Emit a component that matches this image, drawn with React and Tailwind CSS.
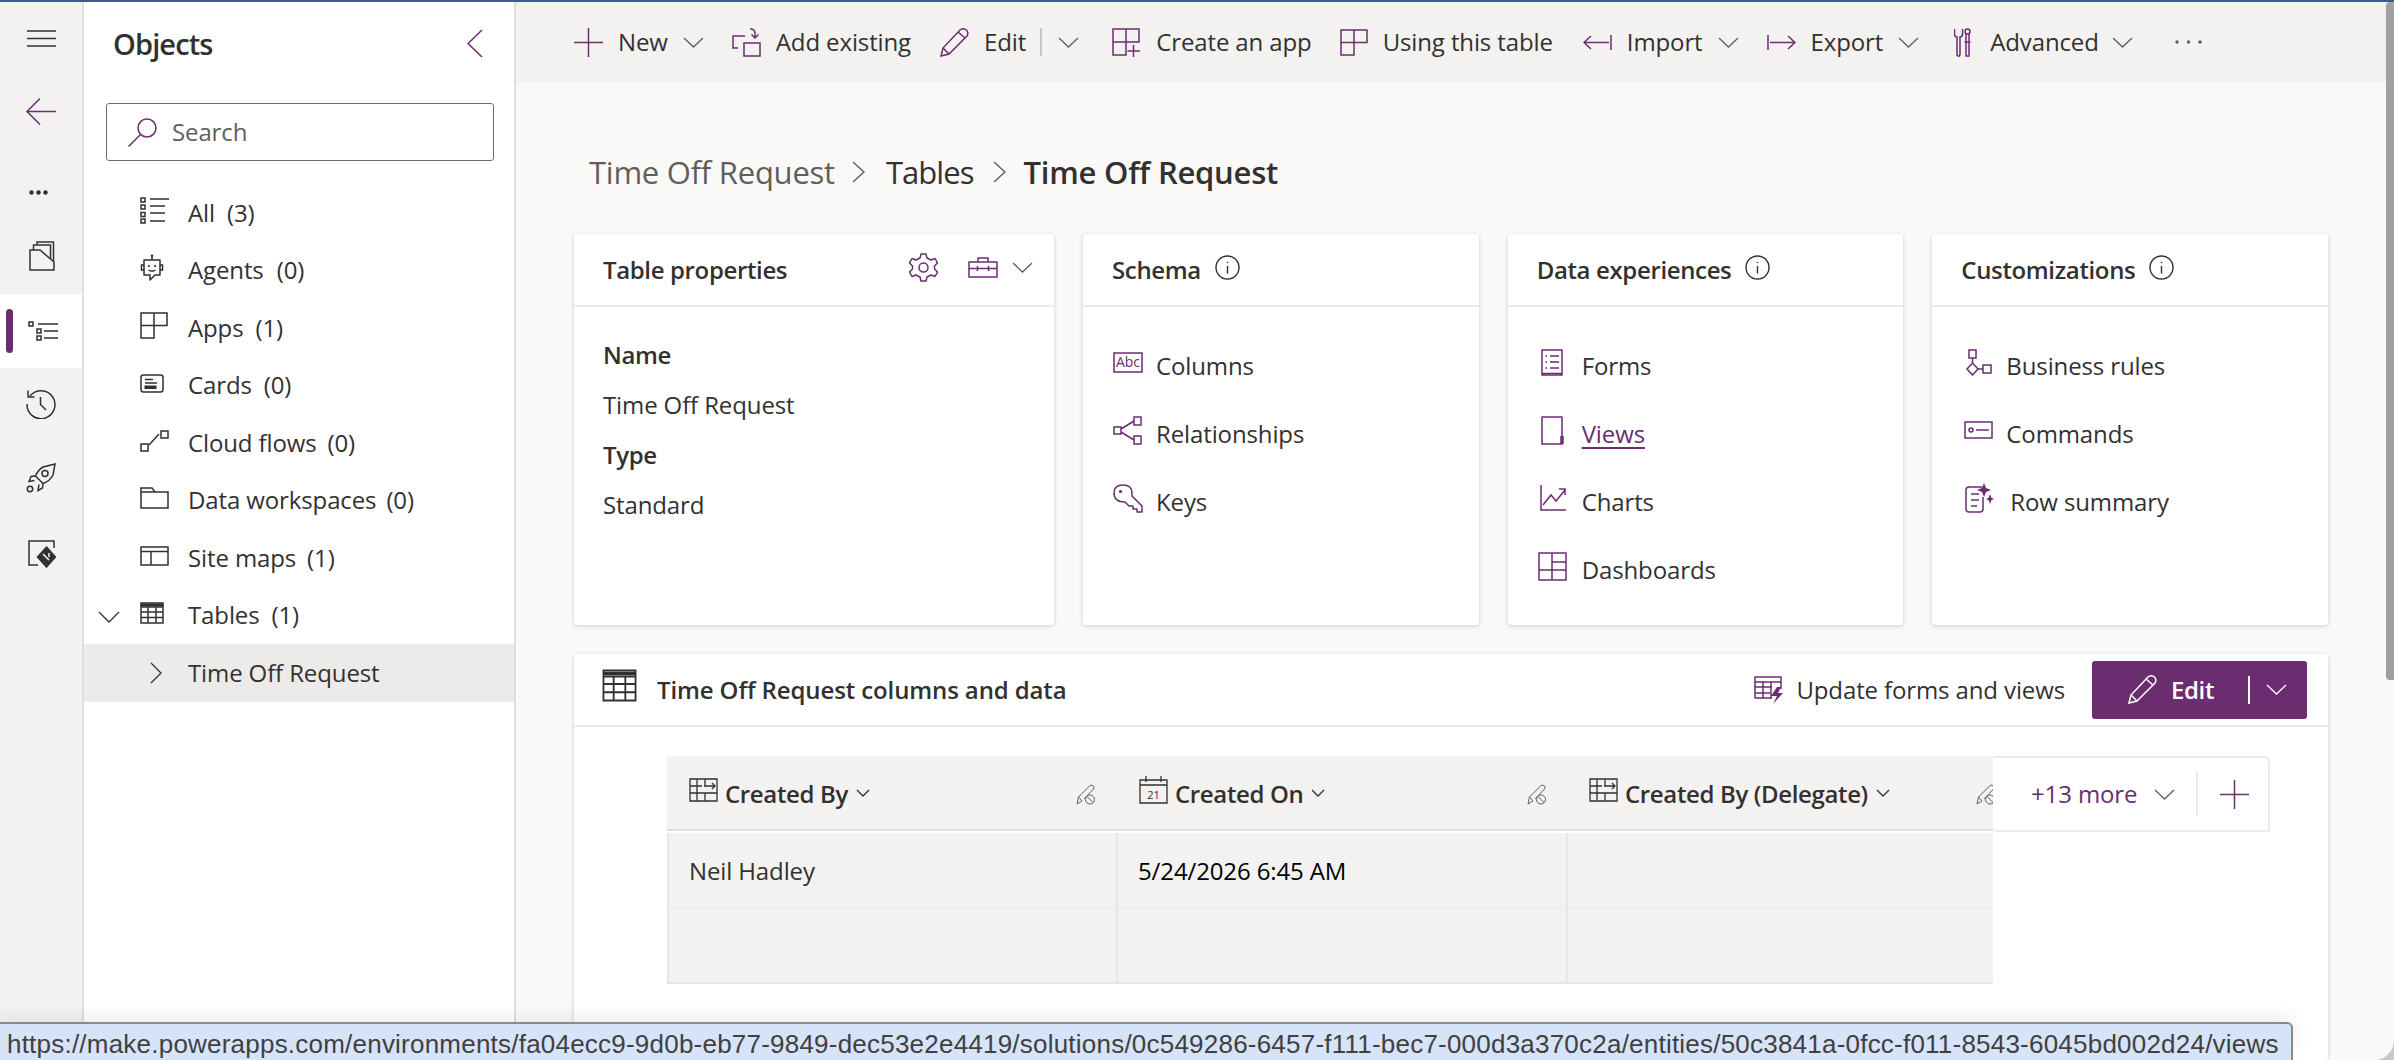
import React from 'react';

const Ico = ({ w, h, className = 'text-[#6b2c70]', sw = 1.5, children }) => (
  <svg width={w} height={h} viewBox={`0 0 ${w} ${h}`} fill="none" stroke="currentColor" strokeWidth={sw} className={`shrink-0 ${className}`}>
    {children}
  </svg>
);
const DK = 'text-[#323130]';
const Chev = ({ w = 21, h = 11, className = 'text-[#605e5c]' }) => (
  <Ico w={w} h={h} className={className} sw={1.3}><path d={`M1 1L${w / 2} ${h - 1}L${w - 1} 1`} /></Ico>
);
const Plus = ({ s = 29 }) => (
  <Ico w={s} h={s}><path d={`M${s / 2} 0V${s}M0 ${s / 2}H${s}`} /></Ico>
);
const Info = () => (
  <Ico w={25} h={25} className={DK} sw={1.4}><circle cx="12.5" cy="12.5" r="11.5" /><path d="M12.5 11V18.5" /><circle cx="12.5" cy="7.5" r="0.8" fill="currentColor" stroke="none" /></Ico>
);
const Pencil = ({ className = 'text-[#6b2c70]' }) => (
  <Ico w={29} h={29} className={className}>
    <path d="M1 28L3 20L20 2Q23 -0.5 26.5 2Q29 5 27 8L9 26Z" /><path d="M3 20L9 26M18 4L25 10" />
  </Ico>
);
const EditColPencil = () => (
  <Ico w={22} h={21} className="text-[#605e5c]" sw={1}>
    <path d="M1 20L2.5 13L14 1.5Q16 0.5 17.5 2Q18.5 3.5 17.5 5L8 15" /><path d="M2.5 13L6 17L1 20" /><circle cx="14" cy="15.5" r="4.5" /><path d="M11 12.5L17 18.5" />
  </Ico>
);
const LookupIco = () => (
  <Ico w={29} h={24} className={DK} sw={1.3}>
    <path d="M1 1H28V23H1Z" /><path d="M1 8H13M1 15H28M8 1V23M16 1V8M16 15V23" /><path d="M15 8H26M23 5L26 8L23 11" />
  </Ico>
);
const CalIco = () => (
  <Ico w={29} h={28} className={DK} sw={1.3}>
    <path d="M1 4H28V27H1Z" /><path d="M1 9H28M7 0V6M22 0V6" />
    <text x="14.5" y="23" textAnchor="middle" fontSize="11" fontFamily="'Open Sans',sans-serif" fill="currentColor" stroke="none">21</text>
  </Ico>
);

const MenuI = () => <Ico w={29} h={18} className={DK} sw={1.4}><path d="M0 1H29M0 8.5H29M0 16H29" /></Ico>;
const BackI = () => <Ico w={30} h={27}><path d="M30 13.5H1M14 0.5L1 13.5L14 26.5" /></Ico>;
const DotsI = () => (
  <Ico w={19} h={5} className={DK}>
    <g fill="currentColor" stroke="none"><circle cx="2.5" cy="2.5" r="2.2" /><circle cx="9.5" cy="2.5" r="2.2" /><circle cx="16.5" cy="2.5" r="2.2" /></g>
  </Ico>
);
const ToolDots = () => (
  <Ico w={27} h={4} className="text-[#605e5c]">
    <g fill="currentColor" stroke="none"><circle cx="2" cy="2" r="1.7" /><circle cx="13.5" cy="2" r="1.7" /><circle cx="25" cy="2" r="1.7" /></g>
  </Ico>
);
const BundleI = () => (
  <Ico w={26} h={30} className={DK}>
    <path d="M1 29V9H11L25 21V29Z" /><path d="M4.5 9V4H21.5V18" /><path d="M8 4V1H24.5V21" />
  </Ico>
);
const ListActiveI = () => (
  <Ico w={30} h={20} className={DK}>
    <path d="M1 1H5V5H1ZM9 8H13V12H9ZM9 15H13V19H9Z" /><path d="M10 3H30M16 10H30M16 17H30" />
  </Ico>
);
const HistoryI = () => (
  <Ico w={30} h={30} className={DK}>
    <path d="M4 7A14 14 0 1 1 1 15" /><path d="M2 1.5V8H8.5" /><path d="M14.5 8V15.5L20 21" />
  </Ico>
);
const RocketI = () => (
  <Ico w={30} h={30} className={DK}>
    <path d="M29 1L17 4Q12 7 9.5 13L17 20.5Q24 18 27 12Z" /><circle cx="19" cy="10.5" r="3" />
    <path d="M9.5 13L5 13.5L3 18.5L8.5 17.5M17 20.5L16.5 25L12 27.5L13 21.5" /><circle cx="4" cy="26" r="2.7" />
  </Ico>
);
const GitI = () => (
  <Ico w={28} h={28} className={DK}>
    <path d="M10 25H1V1H26V8" />
    <path d="M18.5 7L27.5 17L18.5 27L9.5 17Z" fill="currentColor" />
    <path d="M15 14L21 20M21 13V17" stroke="#f3f2f1" />
  </Ico>
);
const SearchI = () => <Ico w={29} h={29}><circle cx="19" cy="10" r="9" /><path d="M12.5 16.5L0.5 28.5" /></Ico>;

const NavAll = () => (
  <Ico w={29} h={27} className={DK}>
    <path d="M1 1H5V5H1ZM1 8H5V12H1ZM1 15.5H5V19.5H1ZM1 22H5V26H1Z" /><path d="M10 2H29M10 9H25M10 16H25M10 24H25" />
  </Ico>
);
const NavAgent = () => (
  <Ico w={24} h={28} className={DK}>
    <circle cx="12" cy="1.8" r="1.3" fill="currentColor" stroke="none" /><path d="M12 2V6" />
    <path d="M4 6H20V21H15L10 26V21H4Z" strokeLinejoin="round" /><path d="M4 11H1.5V16H4M20 11H22.5V16H20" />
    <circle cx="9" cy="12" r="1.1" fill="currentColor" stroke="none" /><circle cx="15" cy="12" r="1.1" fill="currentColor" stroke="none" /><path d="M8.5 16Q12 18.5 15.5 16" />
  </Ico>
);
const GridApp = ({ w = 28, h = 27, className = DK }) => (
  <Ico w={w} h={h} className={className}>
    <path d={`M1 1H${w - 1}V${h / 2}H${w / 2}V${h - 1}H1Z`} /><path d={`M${w / 2} 1V${h / 2}M1 ${h / 2}H${w / 2}`} />
  </Ico>
);
const NavCards = () => (
  <Ico w={24} h={19} className={DK}>
    <rect x="1" y="1" width="22" height="17" rx="2.5" /><path d="M5 5.5H13M5 9H17" /><rect x="4.5" y="11.5" width="12" height="3.5" fill="currentColor" stroke="none" />
  </Ico>
);
const NavFlow = () => (
  <Ico w={29} h={22} className={DK}><path d="M1 14H8V21H1ZM21 1H28V8H21Z" /><path d="M9 15L19 4" /></Ico>
);
const NavFolder = () => <Ico w={29} h={22} className={DK}><path d="M1 21V1H12L15 5H28V21ZM1 5H15" /></Ico>;
const NavSite = () => <Ico w={29} h={20} className={DK}><path d="M1 1H28V19H1Z" /><path d="M1 5.5H28M11 5.5V19" /></Ico>;
const NavTable = ({ w = 24, h = 22, sw = 1.5 }) => (
  <Ico w={w} h={h} className={DK} sw={sw}>
    <path d="M1 1H23V21H1Z" transform={`scale(${w / 24} ${h / 22})`} vectorEffect="non-scaling-stroke" />
    <path d="M1 5H23M1 10H23M1 15.5H23M8 5V21M16 5V21" transform={`scale(${w / 24} ${h / 22})`} vectorEffect="non-scaling-stroke" />
    <path d="M1 3H23" strokeWidth={sw * 2} transform={`scale(${w / 24} ${h / 22})`} vectorEffect="non-scaling-stroke" />
  </Ico>
);

const AddExisting = () => (
  <Ico w={29} h={29}><path d="M13 8H1V20H6" /><path d="M12 15H28V28H12Z" /><path d="M18 1Q23 1 23 5V9M19.5 6.5L23 10L26.5 6.5" /></Ico>
);
const CreateApp = () => (
  <Ico w={29} h={29}>
    <path d="M1 1H27V14H14V27H1Z" /><path d="M14 1V14H1" /><path d="M21.5 17V29M15.5 23H28" />
  </Ico>
);
const ImportI = () => <Ico w={29} h={15}><path d="M28 0V15M26 7.5H1M8 1L1 7.5L8 14" /></Ico>;
const ExportI = () => <Ico w={29} h={15}><path d="M1 0V15M3 7.5H28M21 1L28 7.5L21 14" /></Ico>;
const AdvancedI = () => (
  <Ico w={17} h={29}>
    <path d="M1 1V6Q1 9 3.5 9V26Q3.5 28.5 5 28Q6.5 28.5 6.5 26V9Q9 9 9 6V1" transform="translate(-0.5 0)" /><circle cx="13.5" cy="3.5" r="2.5" /><path d="M12 6V28H15V6M10.5 14H16.5" />
  </Ico>
);
const Gear = () => (
  <Ico w={29} h={29}>
    <path d="M12 1H17L18 5L22 7L26 5.5L28.5 10L25.5 13V16L28.5 19L26 23.5L22 22L18 24L17 28H12L11 24L7 22L3 23.5L0.5 19L3.5 16V13L0.5 10L3 5.5L7 7L11 5Z" strokeLinejoin="round" /><circle cx="14.5" cy="14.5" r="4.5" />
  </Ico>
);
const Briefcase = () => (
  <Ico w={30} h={21}><path d="M1 5H29V20H1Z" /><path d="M10 5V1H20V5M1 11.5H29M9.5 9V14M20.5 9V14" /></Ico>
);
const AbcI = () => (
  <Ico w={30} h={21}>
    <path d="M1 1H29V20H1Z" /><text x="15" y="15" textAnchor="middle" fontSize="14" fontFamily="'Open Sans',sans-serif" fill="currentColor" stroke="none">Abc</text>
  </Ico>
);
const RelI = () => (
  <Ico w={30} h={29}><path d="M1 11H8V18H1ZM21 1H28V9H21ZM21 20H28V28H21Z" /><path d="M8 13L21 5M8 16L21 24" /></Ico>
);
const KeyI = () => (
  <Ico w={30} h={29}>
    <path d="M10 1Q19 1 19 9L19 12L29 22V28H24V25H20V22H16L12 18Q1 18 1 9Q1 1 10 1Z" strokeLinejoin="round" /><circle cx="7.5" cy="7.5" r="1.6" fill="currentColor" stroke="none" />
  </Ico>
);
const FormI = () => (
  <Ico w={22} h={27}><path d="M1 1H21V26H1Z" /><path d="M1 24.5H21" /><path d="M4.5 7H6M9 7H18M4.5 13H6M9 13H18M4.5 19H6M9 19H18" /></Ico>
);
const ViewI = () => (
  <Ico w={24} h={29}><path d="M1 1H21V28H1Z" /><path d="M21 20V28" strokeWidth="3.5" /></Ico>
);
const ChartI = () => (
  <Ico w={26} h={26}><path d="M1 0V25H26" /><path d="M3 20L11 10L16 16L25 5M19 4H25V10" /></Ico>
);
const DashI = () => (
  <Ico w={29} h={29}><path d="M1 1H28V28H1Z" /><path d="M14 1V18H1M14 10H28M1 18H28M14 18V28" /></Ico>
);
const BizI = () => (
  <Ico w={28} h={27}><path d="M5 1H12V9H5Z" /><path d="M8.5 9V14" /><path d="M8.5 14L14 20L8.5 26L3 20Z" /><path d="M14 20H19M19 16H27V24H19Z" /></Ico>
);
const CmdI = () => (
  <Ico w={29} h={18}><path d="M1 1H28V17H1Z" /><circle cx="7" cy="9" r="2" /><path d="M12 9H25" /></Ico>
);
const SummaryI = () => (
  <Ico w={30} h={30}>
    <path d="M18 4H5Q2 4 2 7V26Q2 29 5 29H16Q19 29 19 26V14" /><path d="M7 11H15M7 17H15M7 23H13" />
    <path d="M20 0L22 5L27 7L22 9L20 14L18 9L13 7L18 5Z" fill="currentColor" stroke="none" /><path d="M26 11L27.3 14.7L30 16L27.3 17.3L26 21L24.7 17.3L22 16L24.7 14.7Z" fill="currentColor" stroke="none" />
  </Ico>
);
const UpdateI = () => (
  <Ico w={30} h={28}>
    <path d="M18 22H1V1H27V13" /><path d="M1 6H27M1 11H18M1 17H16M9 6V22M17 6V22" /><path d="M23 11L17 20H23L19 28L29 17H24L27 11Z" fill="currentColor" stroke="none" />
  </Ico>
);

const rail = [
  ['h-[74px]', <MenuI />],
  ['h-[70px]', <BackI />],
  ['h-[52px] mt-[20px] pr-[6px]', <DotsI />],
  ['h-[76px] pl-[2px]', <BundleI />],
  null,
  ['h-[72px]', <HistoryI />],
  ['h-[76px]', <RocketI />],
  ['h-[76px] pl-[2px]', <GitI />],
];

const nav = [
  [<NavAll />, 'All', '(3)', 'ml-[12px]'],
  [<NavAgent />, 'Agents', '(0)', 'ml-[13px]'],
  [<GridApp />, 'Apps', '(1)', 'ml-[12px]'],
  [<NavCards />, 'Cards', '(0)', 'ml-[12px]'],
  [<NavFlow />, 'Cloud flows', '(0)', 'ml-[11px]'],
  [<NavFolder />, 'Data workspaces', '(0)', 'ml-[10px]'],
  [<NavSite />, 'Site maps', '(1)', 'ml-[11px]'],
  [<NavTable />, 'Tables', '(1)', 'ml-[12px]'],
];

const ToolItem = ({ icon, label, chev, mr = 'mr-[29px]', gap = 'gap-[15px]', chevMl = '' }) => (
  <div className={`flex items-center ${gap} ${mr}`}>
    {icon}
    <span className="whitespace-nowrap">{label}</span>
    {chev && <span className={chevMl}><Chev /></span>}
  </div>
);

const LinkRow = ({ icon, label, underline, iconW }) => (
  <div className="flex h-[68px] items-center">
    <div className={`flex items-center mb-[8px] ${iconW}`}>{icon}</div>
    <span className={underline ? 'underline underline-offset-[4px] text-[#6b2c70]' : ''}>{label}</span>
  </div>
);

const Card = ({ title, right, className = 'flex-1', children, px = 'px-[29px]' }) => (
  <section className={`bg-white rounded-[3px] shadow-[0_1px_4px_rgba(0,0,0,0.18)] ${className}`}>
    <header className={`h-[73px] flex items-center border-b-2 border-[#edebe9] ${px}`}>
      <h2 className="font-semibold tracking-[-0.015em] whitespace-nowrap">{title}</h2>
      {right}
    </header>
    {children}
  </section>
);

const ColHead = ({ icon, label, pencilMl }) => (
  <div className="w-[450px] shrink-0 flex items-center pl-[22px] pt-[2px]">
    <div className="mb-[8px]">{icon}</div>
    <span className="ml-[7px] font-semibold tracking-[-0.015em] whitespace-nowrap">{label}</span>
    <Chev w={14} h={8} className="text-[#323130] ml-[8px] mb-[2px]" />
    <div className={`${pencilMl} mt-[2px]`}><EditColPencil /></div>
  </div>
);

export default function App() {
  return (
    <div className="relative w-[2394px] h-[1060px] overflow-hidden bg-[#c8c8c8] font-['Open_Sans',sans-serif] text-[24px] tracking-[-0.005em] text-[#323130]">
      <div className="h-full flex flex-col rounded-br-[20px] overflow-hidden bg-[#faf9f8]">
        <div className="h-[2px] shrink-0 bg-[#3f5b86]" />
        <div className="flex-1 flex min-h-0">
          {/* Rail */}
          <aside className="w-[84px] shrink-0 bg-[#f3f2f1] border-r-2 border-[#e1dfdd] flex flex-col">
            {rail.map((r, i) =>
              r ? (
                <div key={i} className={`flex items-center justify-center ${r[0]}`}>{r[1]}</div>
              ) : (
                <div key={i} className="relative h-[74px] pl-[3px] bg-white flex items-center justify-center">
                  <span className="absolute left-[6px] top-[15px] w-[7px] h-[44px] rounded-full bg-[#6b2c70]" />
                  <ListActiveI />
                </div>
              )
            )}
          </aside>

          {/* Objects */}
          <aside className="w-[432px] shrink-0 bg-white border-r-2 border-[#e1dfdd] flex flex-col">
            <div className="h-[101px] flex items-center justify-between pl-[29px] pr-[31px] pb-[18px]">
              <h1 className="text-[29px] font-semibold tracking-[-0.03em]">Objects</h1>
              <Ico w={16} h={29}><path d="M15 1L1 14.5L15 28" /></Ico>
            </div>
            <div className="ml-[22px] w-[388px] h-[58px] border-[1.5px] border-[#6e6c6a] rounded-[3px] flex items-center pl-[21px] gap-[15px] text-[#605e5c]">
              <SearchI />
              <span>Search</span>
            </div>
            <nav className="mt-[23px] flex flex-col">
              {nav.map(([icon, label, count, ml]) => (
                <div key={label} className="relative h-[57.5px] flex items-center pl-[56px]">
                  {label === 'Tables' && (
                    <span className="absolute left-[14px] top-[24px]"><Chev w={22} h={12} className="text-[#323130]" /></span>
                  )}
                  <div className="w-[48px] flex items-center mb-[4px]">{icon}</div>
                  <span className="whitespace-nowrap">{label}<span className={ml}>{count}</span></span>
                </div>
              ))}
              <div className="h-[58px] bg-[#edebe9] flex items-center pl-[66px]">
                <div className="w-[38px] flex items-center"><Ico w={12} h={22} className={DK} sw={1.3}><path d="M1 1L11 11L1 21" /></Ico></div>
                <span>Time Off Request</span>
              </div>
            </nav>
          </aside>

          {/* Main */}
          <main className="flex-1 min-w-0 flex flex-col">
            <div className="h-[80px] shrink-0 bg-[#f3f2f1] flex items-center pl-[58px]">
              <ToolItem icon={<Plus />} label="New" chev mr="mr-[28px]" />
              <ToolItem icon={<AddExisting />} label="Add existing" />
              <div className="flex items-center mr-[33px]">
                <Pencil />
                <span className="ml-[15px]">Edit</span>
                <span className="ml-[14px] mr-[16px] w-[2px] h-[28px] bg-[#c8c6c4]" />
                <Chev />
              </div>
              <ToolItem icon={<CreateApp />} label="Create an app" mr="mr-[28px]" />
              <ToolItem icon={<GridApp className="text-[#6b2c70]" />} label="Using this table" mr="mr-[30px]" />
              <ToolItem icon={<ImportI />} label="Import" chev mr="mr-[28px]" />
              <ToolItem icon={<ExportI />} label="Export" chev mr="mr-[35px]" />
              <ToolItem icon={<AdvancedI />} label="Advanced" chev mr="mr-[42px]" gap="gap-[19px]" chevMl="-ml-[6px]" />
              <ToolDots />
            </div>

            <div className="flex-1 min-h-0 pl-[58px] pr-[66px] flex flex-col">
              <div className="mt-[67px] h-[46px] pl-[15px] flex items-center text-[31px] tracking-[-0.008em] text-[#323130]">
                <span className="text-[#605e5c]">Time Off Request</span>
                <Ico w={13} h={22} className="text-[#605e5c] ml-[17px] mr-[21px]" sw={1.4}><path d="M1 1L12 11L1 21" /></Ico>
                <span className="tracking-[-0.03em]">Tables</span>
                <Ico w={13} h={22} className="text-[#605e5c] ml-[19px] mr-[18px]" sw={1.4}><path d="M1 1L12 11L1 21" /></Ico>
                <span className="font-semibold">Time Off Request</span>
              </div>

              <div className="mt-[39px] h-[391px] shrink-0 flex gap-[29px]">
                <Card
                  className="w-[480px] shrink-0"
                  title="Table properties"
                  right={
                    <div className="ml-auto flex items-center -mr-[8px] mb-[5px]">
                      <Gear />
                      <div className="ml-[30px]"><Briefcase /></div>
                      <div className="ml-[14px]"><Chev /></div>
                    </div>
                  }
                >
                  <dl className="pl-[29px] pt-[23px] flex flex-col">
                    <dt className="h-[50px] flex items-center font-semibold tracking-[-0.015em]">Name</dt>
                    <dd className="h-[50px] flex items-center">Time Off Request</dd>
                    <dt className="h-[50px] flex items-center font-semibold tracking-[-0.015em]">Type</dt>
                    <dd className="h-[50px] flex items-center">Standard</dd>
                  </dl>
                </Card>
                <Card title={<span className="flex items-center gap-[14px]">Schema<span className="mb-[5px] font-normal"><Info /></span></span>}>
                  <div className="pl-[30px] pt-[25px]">
                    <LinkRow icon={<AbcI />} label="Columns" iconW="w-[43px]" />
                    <LinkRow icon={<RelI />} label="Relationships" iconW="w-[43px]" />
                    <LinkRow icon={<KeyI />} label="Keys" iconW="w-[43px]" />
                  </div>
                </Card>
                <Card title={<span className="flex items-center gap-[14px]">Data experiences<span className="mb-[5px] font-normal"><Info /></span></span>}>
                  <div className="pl-[30px] pt-[25px]">
                    <LinkRow icon={<FormI />} label="Forms" iconW="w-[44px] pl-[3px]" />
                    <LinkRow icon={<ViewI />} label="Views" underline iconW="w-[44px] pl-[3px]" />
                    <LinkRow icon={<ChartI />} label="Charts" iconW="w-[44px] pl-[2px]" />
                    <LinkRow icon={<DashI />} label="Dashboards" iconW="w-[44px]" />
                  </div>
                </Card>
                <Card title={<span className="flex items-center gap-[14px]">Customizations<span className="mb-[5px] font-normal"><Info /></span></span>}>
                  <div className="pl-[32px] pt-[25px]">
                    <LinkRow icon={<BizI />} label="Business rules" iconW="w-[42px]" />
                    <LinkRow icon={<CmdI />} label="Commands" iconW="w-[42px]" />
                    <LinkRow icon={<SummaryI />} label="Row summary" iconW="w-[46px]" />
                  </div>
                </Card>
              </div>

              <section className="mt-[29px] flex-1 min-h-[406px] bg-white rounded-[3px] shadow-[0_1px_4px_rgba(0,0,0,0.18)]">
                <header className="h-[73px] border-b-2 border-[#edebe9] flex items-center pl-[28px] pr-[21px]">
                  <div className="mb-[8px]"><NavTable w={35} h={33} sw={1.8} /></div>
                  <h2 className="ml-[20px] font-semibold tracking-[-0.005em] whitespace-nowrap">Time Off Request columns and data</h2>
                  <div className="ml-auto flex items-center">
                    <UpdateI />
                    <span className="ml-[12px] whitespace-nowrap">Update forms and views</span>
                    <div className="ml-[27px] w-[215px] h-[58px] rounded-[3px] bg-[#6b2c70] text-white flex items-center pl-[36px]">
                      <Pencil className="text-white" />
                      <span className="ml-[14px] font-semibold tracking-[-0.015em]">Edit</span>
                      <span className="ml-[34px] w-[2px] h-[28px] bg-white" />
                      <span className="ml-[16px]"><Chev className="text-white" /></span>
                    </div>
                  </div>
                </header>
                <div className="ml-[93px] mt-[29px] flex">
                  <div className="w-[1326px] shrink-0 overflow-hidden">
                    <div className="h-[75px] bg-[#f3f2f1] border-b-2 border-[#e1dfdd] flex">
                      <ColHead icon={<LookupIco />} label="Created By" pencilMl="ml-[206px]" />
                      <ColHead icon={<CalIco />} label="Created On" pencilMl="ml-[202px]" />
                      <ColHead icon={<LookupIco />} label="Created By (Delegate)" pencilMl="ml-[86px]" />
                    </div>
                    <div className="mt-[2px] bg-[#f3f2f1] border-l-2 border-b-2 border-[#e8e6e4] flex h-[151px]">
                      <div className="w-[449px] shrink-0 border-r-2 border-[#e8e6e4] flex flex-col">
                        <div className="h-[75px] border-b border-[#ebe9e7] flex items-center pl-[20px] pt-[2px]">Neil Hadley</div>
                      </div>
                      <div className="w-[450px] shrink-0 border-r-2 border-[#e8e6e4] flex flex-col">
                        <div className="h-[75px] border-b border-[#ebe9e7] flex items-center pl-[20px] pt-[2px] text-black">5/24/2026 6:45 AM</div>
                      </div>
                      <div className="flex-1 flex flex-col">
                        <div className="h-[75px] border-b border-[#ebe9e7]" />
                      </div>
                    </div>
                  </div>
                  <div className="ml-px w-[276px] h-[76px] border-2 border-l-0 border-[#edebe9] rounded-tr-[6px] flex items-center text-[#6b2c70]">
                    <span className="ml-[37px] whitespace-nowrap">+13 more</span>
                    <span className="ml-[17px]"><Chev className="text-[#605e5c]" /></span>
                    <span className="ml-[21px] w-[2px] h-[44px] bg-[#edebe9]" />
                    <span className="ml-[22px]"><Plus /></span>
                  </div>
                </div>
              </section>
            </div>
          </main>
        </div>
      </div>

      {/* Scrollbar */}
      <div className="absolute right-0 top-[2px] w-[8px] h-[678px] bg-[#a0a0a2] rounded-l-[4px]" />

      {/* Link status tooltip */}
      <div className="absolute left-0 bottom-0 w-[2293px] h-[38px] bg-[#d6e3f9] border-t-2 border-r-2 border-[#8a8a8a] rounded-tr-[6px] shadow-[0_-6px_18px_rgba(0,0,0,0.07)] flex items-center pl-[7px] pt-[5px] font-['Liberation_Sans',sans-serif] text-[26px] tracking-[0.22px] text-[#404040] whitespace-nowrap">
        https://make.powerapps.com/environments/fa04ecc9-9d0b-eb77-9849-dec53e2e4419/solutions/0c549286-6457-f111-bec7-000d3a370c2a/entities/50c3841a-0fcc-f011-8543-6045bd002d24/views
      </div>
    </div>
  );
}
